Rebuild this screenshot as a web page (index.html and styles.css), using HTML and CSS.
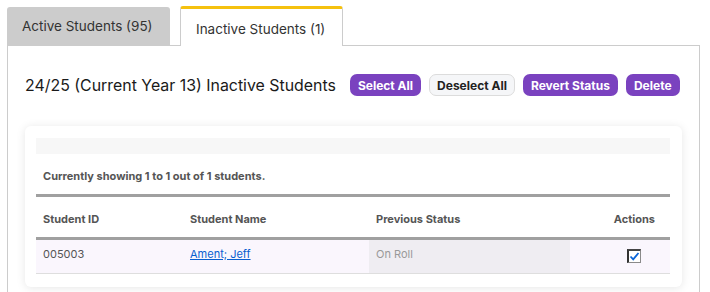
FILE: index.html
```html
<!DOCTYPE html>
<html lang="en">
<head>
    <meta charset="UTF-8">
    <meta name="viewport" content="width=device-width, initial-scale=1.0">
    <title>Inactive Students</title>
    <link rel="stylesheet" href="styles.css">
</head>
<body>
    <div class="tabs">
        <a href="#" class="tab">Active Students (95)</a>
        <a href="#" class="tab tab-active">Inactive Students (1)</a>
    </div>

    <div class="tab-pane">
        <div class="pane-header">
            <h2 class="pane-title">24/25 (Current Year 13) Inactive Students</h2>
            <div class="pane-actions">
                <button class="btn btn-primary">Select All</button>
                <button class="btn btn-light">Deselect All</button>
                <button class="btn btn-primary">Revert Status</button>
                <button class="btn btn-primary">Delete</button>
            </div>
        </div>

        <div class="card">
            <div class="card-strip"></div>
            <table class="students">
                <thead>
                    <tr class="summary-row">
                        <th colspan="4">Currently showing 1 to 1 out of 1 students.</th>
                    </tr>
                    <tr class="head-row">
                        <th class="col-id">Student ID</th>
                        <th class="col-name">Student Name</th>
                        <th class="col-status">Previous Status</th>
                        <th class="col-actions">Actions</th>
                    </tr>
                </thead>
                <tbody>
                    <tr class="student-row">
                        <td>005003</td>
                        <td><a href="#" class="student-link">Ament; Jeff</a></td>
                        <td class="status-cell">On Roll</td>
                        <td class="col-actions">
                            <span class="check">
                                <svg width="11" height="11" viewBox="0 0 11 11">
                                    <path d="M1.5 5.5 L4.2 8.3 L9.5 2" fill="none" stroke="#0a64d8" stroke-width="1.8"/>
                                </svg>
                            </span>
                        </td>
                    </tr>
                </tbody>
            </table>
        </div>
    </div>
</body>
</html>
```

FILE: styles.css
```css
* {
    margin: 0;
    padding: 0;
    box-sizing: border-box;
}

body {
    font-family: Inter, 'Liberation Sans', sans-serif;
    background: white;
    color: #222;
    padding: 6px 10px 0 7px;
}

.tabs {
    display: flex;
    align-items: flex-end;
    gap: 10px;
    border-bottom: 1px solid #ccc;
    height: 40px;
}

.tab {
    flex-shrink: 0;
    width: 163px;
    height: 38px;
    padding: 0 15px;
    display: flex;
    align-items: center;
    background: #cccccc;
    color: #333;
    font-size: 13.5px;
    white-space: nowrap;
    text-decoration: none;
    border-radius: 3px 3px 0 0;
}

.tab-active {
    height: 40px;
    margin-bottom: -1px;
    padding-top: 2px;
    background: white;
    border: 1px solid #ccc;
    border-top: 3px solid #f5c10e;
    border-bottom: none;
    border-radius: 3px 3px 0 0;
}

.tab-pane {
    border-left: 1px solid #ccc;
    border-right: 1px solid #ccc;
    padding: 28px 17px 20px 17px;
    height: 260px;
}

.pane-header {
    display: flex;
    align-items: center;
    gap: 14px;
}

.pane-title {
    flex-shrink: 0;
    white-space: nowrap;
    font-size: 15.9px;
    font-weight: 400;
    color: #1a1a1a;
}

.pane-actions {
    display: flex;
    gap: 8px;
}

.btn {
    flex-shrink: 0;
    white-space: nowrap;
    height: 22px;
    padding: 0 8px;
    border-radius: 7px;
    font-family: inherit;
    font-size: 12px;
    font-weight: 700;
    cursor: pointer;
    border: none;
}

.btn-primary {
    background: #7a42bf;
    color: white;
}

.btn-light {
    padding: 0 7px;
    background: #f5f6f8;
    color: #222;
    border: 1px solid #dcdcdc;
}

.card {
    margin-top: 30px;
    width: 657px;
    background: white;
    border-radius: 6px;
    box-shadow: 0 1px 10px rgba(0, 0, 0, 0.1);
    padding: 12px 12px 13px 11px;
}

.card-strip {
    height: 16px;
    background: #f7f7f7;
}

.students {
    width: 100%;
    border-collapse: collapse;
    font-size: 11px;
    color: #555;
}

.students th {
    text-align: left;
    font-weight: 700;
    padding: 0 7px;
    white-space: nowrap;
}

.summary-row th {
    height: 41px;
    border-bottom: 3px solid #a0a0a0;
    padding-top: 4px;
}

.head-row th {
    height: 43px;
    border-bottom: 3px solid #a0a0a0;
    padding-top: 4px;
}

.col-id { width: 147px; }
.col-name { width: 186px; }
.col-status { width: 201px; }

.students th.col-actions,
.students td.col-actions {
    text-align: right;
    padding-right: 15px;
}

.student-row td {
    height: 35px;
    padding: 7px 7px 0;
    vertical-align: top;
    background: #faf6fd;
    border-bottom: 1px solid #dedede;
}

.student-row td.status-cell {
    background: #efedf2;
    color: #999;
}

.student-link {
    color: #0a5fd0;
}

.student-row td.col-actions {
    padding-top: 9px;
    padding-right: 29px;
}

.check {
    display: inline-flex;
    align-items: center;
    justify-content: center;
    width: 14px;
    height: 14px;
    background: white;
    border: 1px solid #8a8a8a;
    border-left: 2px solid #333;
    border-top: 2px solid #444;
}
```
